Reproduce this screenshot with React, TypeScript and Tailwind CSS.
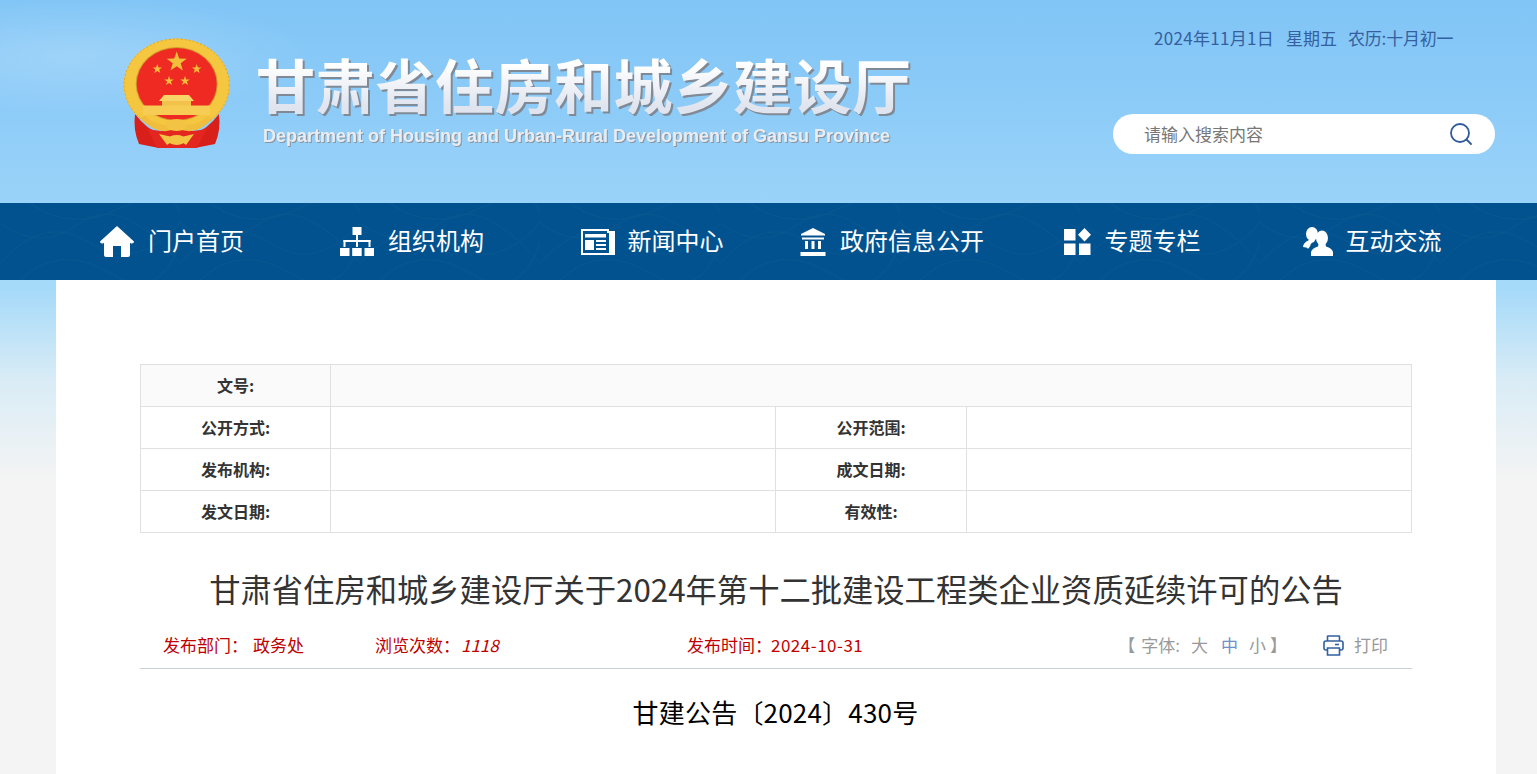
import React from 'react'

const CJK = 'font-["Noto_Sans_CJK_SC",sans-serif]'

// 五角星顶点
const starPoints = (cx: number, cy: number, r: number) => {
  const pts: string[] = []
  for (let i = 0; i < 10; i++) {
    const radius = i % 2 === 0 ? r : r * 0.4
    const a = (Math.PI / 5) * i - Math.PI / 2
    pts.push(`${(cx + radius * Math.cos(a)).toFixed(2)},${(cy + radius * Math.sin(a)).toFixed(2)}`)
  }
  return pts.join(' ')
}

const Emblem = () => (
  <svg viewBox="0 0 108 110" className="w-[108px] h-[110px] shrink-0">
    <path d="M12 76 Q24 92 38 96 L36 110 L16 106 Q10 92 12 76 Z" fill="#d81f1a" />
    <path d="M96 76 Q84 92 70 96 L72 110 L92 106 Q98 92 96 76 Z" fill="#d81f1a" />
    <ellipse cx="53.7" cy="47" rx="53" ry="46.5" fill="#f5c740" />
    <ellipse cx="53.7" cy="47" rx="52.5" ry="46" fill="none" stroke="#e0a526" strokeWidth="1" strokeDasharray="2 2" />
    <ellipse cx="53.7" cy="46" rx="41" ry="37" fill="#d39a2a" />
    <ellipse cx="53.7" cy="46" rx="40" ry="36" fill="#ee2a22" />
    <polygon points={starPoints(53.7, 24, 10.5)} fill="#f3bf3a" />
    <polygon points={starPoints(34.3, 31, 5)} fill="#f3bf3a" />
    <polygon points={starPoints(73.7, 31, 5)} fill="#f3bf3a" />
    <polygon points={starPoints(46, 43, 5)} fill="#f3bf3a" />
    <polygon points={starPoints(62, 43, 5)} fill="#f3bf3a" />
    <path d="M36 63 L41 57 H66 L71 63 Z" fill="#f8d368" />
    <rect x="39" y="63" width="29" height="5" fill="#f3c24a" />
    <rect x="20" y="67.5" width="67" height="9.5" fill="#f6cc55" />
    <path d="M24 90 Q38 96 53.7 90 Q70 96 84 90 L74 110 H34 Z" fill="#e3261f" />
    <path d="M17 80 Q36 100 53.7 90 Q72 100 90 80 L85 78 Q70 92 53.7 84 Q38 92 22 78 Z" fill="#f1bd3c" />
    <ellipse cx="53.7" cy="87" rx="11" ry="6" fill="#f3c444" />
    <path d="M36 96 L54 100 L44 107 Z M71 96 L54 100 L63 107 Z" fill="#f3c444" />
    <ellipse cx="53.7" cy="102" rx="9" ry="5" fill="#f3c444" />
  </svg>
)

const HomeIcon = () => (
  <svg viewBox="0 0 34 32" className="w-[34px] h-[32px] shrink-0" fill="#fff">
    <path d="M17 0 L34 15.5 Q34 18 31 17.5 L17 5.5 L3 17.5 Q0 18 0 15.5 Z" />
    <path d="M17 3.5 L30 15 V29 Q30 31 28 31 H21 V20 H13 V31 H6 Q4 31 4 29 V15 Z" />
  </svg>
)

const OrgIcon = () => (
  <svg viewBox="0 0 34 30" className="w-[34px] h-[30px] shrink-0" fill="#fff">
    <rect x="12.5" y="0" width="9" height="8" />
    <rect x="16" y="8" width="2" height="6" />
    <rect x="3.5" y="13" width="27" height="2" />
    <rect x="3.5" y="13" width="2" height="7" />
    <rect x="16" y="13" width="2" height="7" />
    <rect x="28.5" y="13" width="2" height="7" />
    <rect x="0" y="21" width="9.5" height="8" />
    <rect x="12.2" y="21" width="9.5" height="8" />
    <rect x="24.5" y="21" width="9.5" height="8" />
  </svg>
)

const NewsIcon = () => (
  <svg viewBox="0 0 34 26" className="w-[34px] h-[26px] shrink-0">
    <path d="M1 1 H27 V3 H33 V25 H1 Z" fill="none" stroke="#fff" strokeWidth="2" />
    <rect x="28" y="3" width="5" height="22" fill="#fff" />
    <rect x="4" y="5" width="21" height="3.5" fill="#fff" />
    <rect x="4" y="11" width="9" height="10" fill="#fff" />
    <rect x="15" y="11" width="10" height="2" fill="#fff" />
    <rect x="15" y="15" width="10" height="2" fill="#fff" />
    <rect x="15" y="19" width="10" height="2" fill="#fff" />
  </svg>
)

const GovIcon = () => (
  <svg viewBox="0 0 26 28" className="w-[26px] h-[28px] shrink-0" fill="#fff">
    <path d="M13 0 L25 6 V7.5 H1 V6 Z" />
    <rect x="2" y="9.5" width="22" height="2" />
    <rect x="5" y="13" width="3" height="8" />
    <rect x="11.5" y="13" width="3" height="8" />
    <rect x="18" y="13" width="3" height="8" />
    <rect x="0.5" y="24" width="25" height="4" />
  </svg>
)

const TopicIcon = () => (
  <svg viewBox="0 0 27 27" className="w-[27px] h-[27px] shrink-0" fill="#fff">
    <rect x="0" y="1" width="11.5" height="11.5" />
    <path d="M20.5 0 L27 6.8 L20.5 13.5 L14 6.8 Z" />
    <rect x="0" y="15.5" width="11.5" height="11.5" />
    <rect x="15" y="15.5" width="11.5" height="11.5" />
  </svg>
)

const PeopleIcon = () => (
  <svg viewBox="0 0 30 29" className="w-[30px] h-[29px] shrink-0" fill="#fff">
    <ellipse cx="9" cy="7" rx="6" ry="7" />
    <path d="M6 13 H12 L11 15 Q7 16 6 21 L0 20 Q0 16 6 13 Z" />
    <path d="M5 22 L8 17.5 L3 19 Z" />
    <ellipse cx="19" cy="11" rx="6" ry="7.5" />
    <path d="M15.5 17 H22.5 L23 19.5 Q29 21 30 25 V29 H8 V25 Q9 21 15 19.5 Z" />
  </svg>
)

const PrintIcon = () => (
  <svg viewBox="0 0 21 21" className="w-[21px] h-[21px] shrink-0" fill="none" stroke="#33609f" strokeWidth="1.6">
    <path d="M4.5 6 V1.5 Q4.5 1 5 1 H16 Q16.5 1 16.5 1.5 V6" />
    <rect x="1" y="6" width="19" height="9" rx="2" />
    <path d="M4.5 13 H16.5 V20 H4.5 Z" fill="#fff" />
    <path d="M12 9.5 H16" />
  </svg>
)

const navItems = [
  { label: '门户首页', icon: <HomeIcon />, gap: 'gap-[14px]' },
  { label: '组织机构', icon: <OrgIcon />, gap: 'gap-[14px]' },
  { label: '新闻中心', icon: <NewsIcon />, gap: 'gap-[13px]' },
  { label: '政府信息公开', icon: <GovIcon />, gap: 'gap-[14px]' },
  { label: '专题专栏', icon: <TopicIcon />, gap: 'gap-[14px]' },
  { label: '互动交流', icon: <PeopleIcon />, gap: 'gap-[13px]' },
]

const Label = ({ text, shaded }: { text: string; shaded?: boolean }) => (
  <div
    className={`h-[42px] pb-[2px] flex items-center justify-center text-[16px] font-bold text-[#333] border-r border-b border-[#e0e0e0] ${shaded ? 'bg-[#fafafa]' : ''}`}
  >
    {text}
  </div>
)

const Cell = ({ className = '' }: { className?: string }) => (
  <div className={`h-[42px] border-r border-b border-[#e0e0e0] ${className}`} />
)

const MetaTable = () => (
  <div className="w-[1272px] ml-[84px] border-l border-t border-[#e0e0e0] grid grid-cols-[190px_445px_191px_1fr]">
    <Label text="文号:" shaded />
    <Cell className="col-span-3 bg-[#fafafa]" />
    <Label text="公开方式:" />
    <Cell />
    <Label text="公开范围:" />
    <Cell />
    <Label text="发布机构:" />
    <Cell />
    <Label text="成文日期:" />
    <Cell />
    <Label text="发文日期:" />
    <Cell />
    <Label text="有效性:" />
    <Cell />
  </div>
)

export default function App() {
  return (
    <div
      className={`relative h-[774px] overflow-hidden ${CJK} bg-[radial-gradient(ellipse_240px_60px_at_70px_55px,rgba(255,255,255,0.2),transparent),linear-gradient(#80c5f6_0,#8ccbf8_100px,#9ad3f9_200px,#a6daf9_290px,#d9ecf6_380px,#f4f4f4_480px)]`}
    >
      {/* 顶部 */}
      <header className="h-[203px] flex">
        <div className="flex pl-[123px] pt-[38px]">
          <Emblem />
          <div className="ml-[25px]">
            <div className="h-[70px] mt-[6px] text-[59px] leading-[80px] tracking-[0.6px] font-bold whitespace-nowrap bg-[linear-gradient(#ffffff_30%,#dfe4ee_90%)] bg-clip-text text-transparent drop-shadow-[2px_2px_0_#808a96]">
              甘肃省住房和城乡建设厅
            </div>
            <div className="mt-[11px] ml-[7px] text-[18px] leading-[22px] font-bold whitespace-nowrap text-[#e9edf3] drop-shadow-[1.5px_1.5px_0_#8a929c] font-['Liberation_Sans',sans-serif]">
              Department of Housing and Urban-Rural Development of Gansu Province
            </div>
          </div>
        </div>
        <div className="ml-auto mr-[42px] w-[382px] flex flex-col">
          <div className="mt-[26px] pl-[41px] h-[24px] flex text-[17px] leading-[24px] text-[#34609f] whitespace-nowrap">
            <span className="w-[132px] tracking-[0.3px]">2024年11月1日</span>
            <span className="w-[62px]">星期五</span>
            <span className="tracking-[-0.2px]">农历:十月初一</span>
          </div>
          <div className="mt-[64px] h-[40px] rounded-full bg-white flex items-center pl-[31px] pr-[23px] justify-between">
            <span className="text-[17px] text-[#777]">请输入搜索内容</span>
            <svg viewBox="0 0 22 22" className="w-[22px] h-[22px]" fill="none" stroke="#2f5a9b" strokeWidth="1.8">
              <circle cx="10" cy="10" r="9" />
              <path d="M16.5 16.5 L21 21" strokeLinecap="round" />
            </svg>
          </div>
        </div>
      </header>

      {/* 导航 */}
      <nav className="relative h-[77px] bg-[#02528f] overflow-hidden">
        <svg className="absolute inset-0 w-full h-full" aria-hidden="true">
          <defs>
            <pattern id="wave" width="180" height="77" patternUnits="userSpaceOnUse">
              <path
                d="M0 60 Q45 10 90 40 T180 20 M0 20 Q40 50 80 20 T180 60 M20 77 Q60 40 110 70 T180 40 M30 0 Q70 30 120 5 T180 10"
                fill="none"
                stroke="#06588f"
                strokeWidth="1"
              />
            </pattern>
          </defs>
          <rect width="100%" height="100%" fill="url(#wave)" />
        </svg>
        <div className="relative ml-[52px] w-[1440px] h-full grid grid-cols-6">
          {navItems.map((item) => (
            <div key={item.label} className={`flex items-center justify-center ${item.gap} text-white text-[24px]`}>
              {item.icon}
              <span className="whitespace-nowrap pb-[3px]">{item.label}</span>
            </div>
          ))}
        </div>
      </nav>

      {/* 正文 */}
      <main className="ml-[56px] w-[1440px] h-[494px] bg-white pt-[84px]">
        <MetaTable />
        <h1 className="mt-[33px] text-center text-[31.3px] leading-[46px] font-normal text-[#333] whitespace-nowrap">
          甘肃省住房和城乡建设厅关于2024年第十二批建设工程类企业资质延续许可的公告
        </h1>
        <div className="mx-[84px] mt-[21px] h-[36px] border-b border-[#c8d0dc] flex text-[17px] leading-[24px] whitespace-nowrap">
          <div className="pl-[23px] w-[235px] flex text-[#c00000]">
            <span className="w-[90px]">发布部门：</span>
            <span>政务处</span>
          </div>
          <div className="w-[312px] flex text-[#c00000]">
            <span className="w-[86px]">浏览次数：</span>
            <span className="italic">1118</span>
          </div>
          <div className="flex text-[#c00000]">
            <span className="w-[84px]">发布时间：</span>
            <span className="tracking-[0.5px]">2024-10-31</span>
          </div>
          <div className="ml-auto flex items-center h-[24px] pr-[24px] text-[#999]">
            <span className="w-[17px] mr-[6px]">【</span>
            <span>字体:</span>
            <span className="ml-[11px]">大</span>
            <span className="ml-[13px] text-[#6f8fc9]">中</span>
            <span className="ml-[11px]">小</span>
            <span className="ml-[4px] w-[17px]">】</span>
            <span className="ml-[36px]"><PrintIcon /></span>
            <span className="ml-[10px]">打印</span>
          </div>
        </div>
        <p className="mt-[24px] text-center text-[26px] leading-[38px] tracking-[0.2px] text-black ml-[-1px]">甘建公告〔2024〕430号</p>
      </main>
    </div>
  )
}
